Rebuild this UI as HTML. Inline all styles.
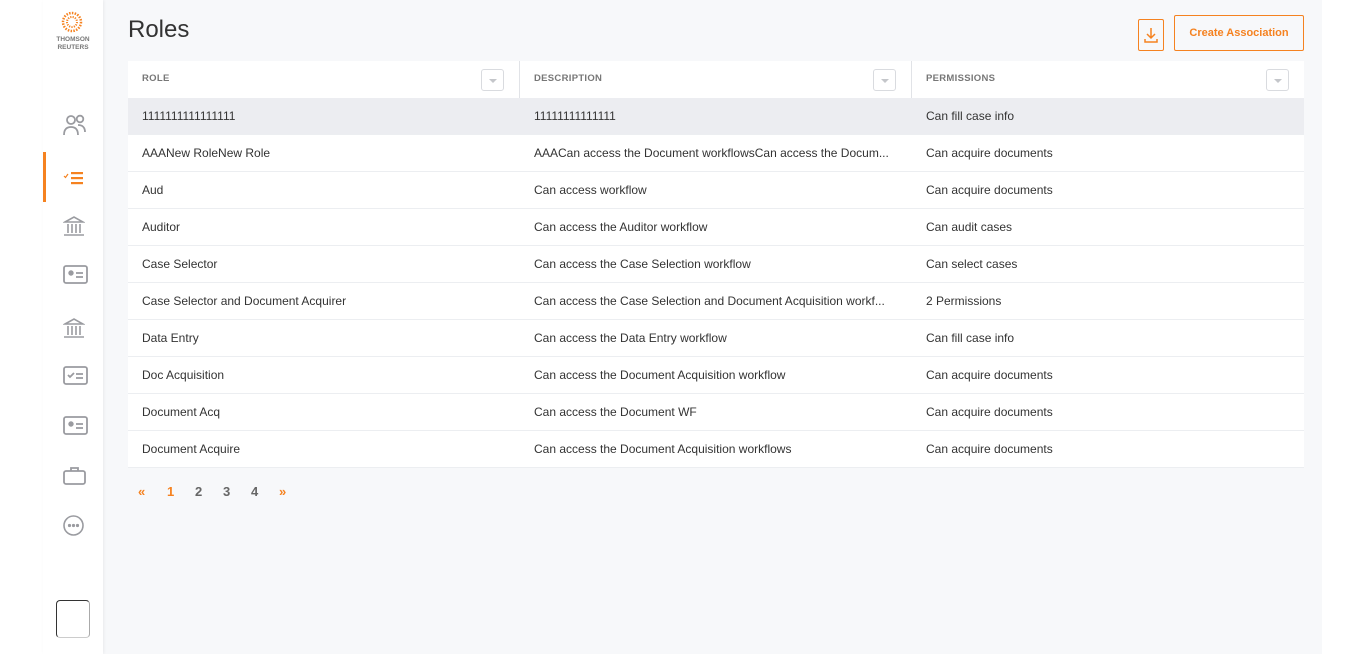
<!DOCTYPE html>
<html><head><style>
body{margin:0;width:1366px;height:654px;background:#fff;font-family:"Liberation Sans",sans-serif;position:relative;overflow:hidden}
.main{position:absolute;left:103px;top:0;width:1219px;height:654px;background:#f7f8fa}
.side{position:absolute;left:43px;top:0;width:60px;height:654px;background:#fff;box-shadow:1px 0 3px rgba(0,0,0,.06)}
h1{position:absolute;left:128px;top:16px;margin:0;font-weight:normal;font-size:24px;color:#333}
.tbl{position:absolute;left:128px;top:61px;width:1176px;background:#fff}
.row{height:36px;border-bottom:1px solid #eceef1;position:relative;font-size:12px;color:#333}
.row span{position:absolute;top:11px;white-space:nowrap;overflow:hidden;width:365px}
.hd{height:37px;border-bottom:none;font-size:9.5px;font-weight:bold;color:#777;letter-spacing:.3px}
.hd span{top:12px}
.c1{left:14px}.c2{left:406px}.c3{left:798px}
.sep{position:absolute;top:0;width:1px;height:37px;background:#e1e3e7}
.fb{position:absolute;top:8px;width:23px;height:22px;border:1px solid #d9dbdf;border-radius:3px;box-sizing:border-box}
.fb:after{content:"";position:absolute;left:7px;top:9px;border:4px solid transparent;border-top:4px solid #c4c6ca}
.sel{background:#ecedf1}
.pg{position:absolute;top:484px;font-size:13px;font-weight:bold;color:#666}
.ic{position:absolute;left:63px}
</style></head><body>
<div class="main"></div>
<div class="side"></div>
<svg style="position:absolute;left:61px;top:11px" width="22" height="22"><circle cx="11" cy="11" r="9" fill="none" stroke="#f58220" stroke-width="2.5" stroke-dasharray="1.5 1.3"/><circle cx="11" cy="11" r="5" fill="none" stroke="#f58220" stroke-width="2" stroke-dasharray="1.2 1.2"/></svg>
<div style="position:absolute;left:47px;top:36px;width:52px;text-align:center;font-size:6.5px;font-weight:bold;color:#777;line-height:8px">THOMSON<br>REUTERS</div>
<svg class="ic" style="top:114px" width="24" height="22" fill="none" stroke="#9a9ba0" stroke-width="1.8"><circle cx="8" cy="6" r="4"/><circle cx="17" cy="5" r="3.3"/><path d="M1 21c0-6 3-8 7-8s7 2 7 8M15 11c4 0 7 2 7 7"/></svg>
<div style="position:absolute;left:43px;top:152px;width:3px;height:50px;background:#f58220"></div>
<svg class="ic" style="top:170px" width="22" height="16"><path d="M1 6l1.5 1.5L5 4" stroke="#f58220" fill="none" stroke-width="1.2"/><rect x="8" y="2" width="12" height="2.2" fill="#f58220"/><rect x="8" y="7" width="12" height="2.2" fill="#f58220"/><rect x="8" y="12" width="12" height="2.2" fill="#f58220"/></svg>
<svg class="ic" style="top:215px" width="22" height="22" fill="none" stroke="#9a9ba0" stroke-width="1.6"><path d="M2 7L11 2l9 5zM5 9v9M9 9v9M13 9v9M17 9v9M1 20h20"/></svg>
<svg class="ic" style="top:265px" width="26" height="20" fill="none" stroke="#9a9ba0" stroke-width="1.8"><rect x="1" y="1" width="23" height="17" rx="2"/><circle cx="8" cy="8" r="1.8" fill="#9a9ba0"/><path d="M13 8h7M13 12h7"/></svg>
<svg class="ic" style="top:317px" width="22" height="22" fill="none" stroke="#9a9ba0" stroke-width="1.6"><path d="M2 7L11 2l9 5zM5 9v9M9 9v9M13 9v9M17 9v9M1 20h20"/></svg>
<svg class="ic" style="top:366px" width="26" height="20" fill="none" stroke="#9a9ba0" stroke-width="1.8"><rect x="1" y="1" width="23" height="17" rx="2"/><path d="M5 9l2 2 4-4M13 8h7M13 12h7"/></svg>
<svg class="ic" style="top:416px" width="26" height="20" fill="none" stroke="#9a9ba0" stroke-width="1.8"><rect x="1" y="1" width="23" height="17" rx="2"/><circle cx="8" cy="8" r="1.8" fill="#9a9ba0"/><path d="M13 8h7M13 12h7"/></svg>
<svg class="ic" style="top:466px" width="24" height="20" fill="none" stroke="#9a9ba0" stroke-width="1.8"><rect x="1" y="5" width="21" height="13" rx="2"/><path d="M8 5V2h7v3"/></svg>
<svg class="ic" style="top:515px" width="22" height="22" fill="none" stroke="#9a9ba0" stroke-width="1.6"><circle cx="10.5" cy="10.5" r="9.5"/><circle cx="6.5" cy="10.5" r=".8" fill="#9a9ba0"/><circle cx="10.5" cy="10.5" r=".8" fill="#9a9ba0"/><circle cx="14.5" cy="10.5" r=".8" fill="#9a9ba0"/></svg>
<div style="position:absolute;left:56px;top:600px;width:34px;height:38px;border-left:1px solid #333;border-right:1px solid #aaa;border-top:1px solid #333;border-bottom:1px solid #ccc;border-radius:4px;box-sizing:border-box"></div>
<h1>Roles</h1>
<div style="position:absolute;left:1138px;top:19px;width:26px;height:32px;border:1px solid #f58220;border-radius:2px;box-sizing:border-box"><svg width="24" height="30"><path d="M12 8v10M8 14l4 4 4-4M6 19v3h12v-3" stroke="#f58220" stroke-width="1.5" fill="none"/></svg></div>
<div style="position:absolute;left:1174px;top:15px;width:130px;height:36px;border:1px solid #f58220;border-radius:2px;box-sizing:border-box;color:#f58220;font-size:11px;font-weight:bold;text-align:center;line-height:34px">Create Association</div>
<div class="tbl">
<div class="row hd"><span class="c1">ROLE</span><span class="c2">DESCRIPTION</span><span class="c3">PERMISSIONS</span>
<div class="fb" style="left:353px"></div><div class="sep" style="left:391px"></div><div class="fb" style="left:745px"></div><div class="sep" style="left:783px"></div><div class="fb" style="left:1138px"></div></div>
<div class="row sel"><span class="c1">1111111111111111</span><span class="c2">11111111111111</span><span class="c3">Can fill case info</span></div>
<div class="row"><span class="c1">AAANew RoleNew Role</span><span class="c2">AAACan access the Document workflowsCan access the Docum...</span><span class="c3">Can acquire documents</span></div>
<div class="row"><span class="c1">Aud</span><span class="c2">Can access workflow</span><span class="c3">Can acquire documents</span></div>
<div class="row"><span class="c1">Auditor</span><span class="c2">Can access the Auditor workflow</span><span class="c3">Can audit cases</span></div>
<div class="row"><span class="c1">Case Selector</span><span class="c2">Can access the Case Selection workflow</span><span class="c3">Can select cases</span></div>
<div class="row"><span class="c1">Case Selector and Document Acquirer</span><span class="c2">Can access the Case Selection and Document Acquisition workf...</span><span class="c3">2 Permissions</span></div>
<div class="row"><span class="c1">Data Entry</span><span class="c2">Can access the Data Entry workflow</span><span class="c3">Can fill case info</span></div>
<div class="row"><span class="c1">Doc Acquisition</span><span class="c2">Can access the Document Acquisition workflow</span><span class="c3">Can acquire documents</span></div>
<div class="row"><span class="c1">Document Acq</span><span class="c2">Can access the Document WF</span><span class="c3">Can acquire documents</span></div>
<div class="row"><span class="c1">Document Acquire</span><span class="c2">Can access the Document Acquisition workflows</span><span class="c3">Can acquire documents</span></div>
</div>
<span class="pg" style="left:138px;color:#f58220">«</span>
<span class="pg" style="left:167px;color:#f58220">1</span>
<span class="pg" style="left:195px">2</span>
<span class="pg" style="left:223px">3</span>
<span class="pg" style="left:251px">4</span>
<span class="pg" style="left:279px;color:#f58220">»</span>
</body></html>
